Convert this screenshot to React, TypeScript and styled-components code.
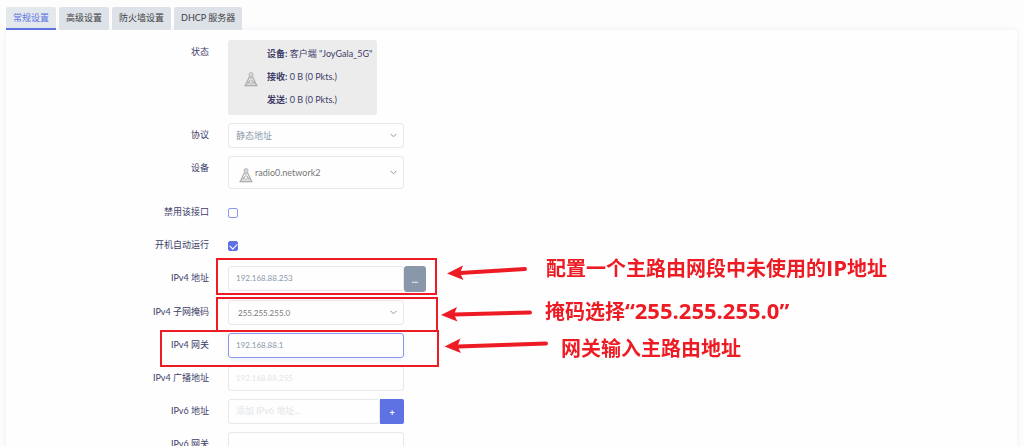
import React from "react";
import styled, { createGlobalStyle, css } from "styled-components";

const GlobalStyle = createGlobalStyle`
  * { box-sizing: border-box; }
  html, body { margin: 0; height: 100%; overflow: hidden; }
  body {
    background: #fdfdfe;
    color: #3d3d69;
    font-family: Lato, "Noto Sans CJK SC", sans-serif;
    font-size: 9px;
    line-height: 12px;
  }
  button, input, select { font: inherit; }
`;

const Page = styled.main`
  position: relative;
  padding: 7px 7px 0 6px;
`;

const TabBar = styled.nav`
  display: flex;
  gap: 3px;
`;

const Tab = styled.button<{ $active?: boolean }>`
  height: 23px;
  padding: 0 7px;
  border: 0;
  border-bottom: 2px solid ${(p) => (p.$active ? "#5e72e4" : "#dce2e7")};
  border-radius: 2px 2px 0 0;
  background: ${(p) => (p.$active ? "#e3e8ec" : "#dce2e7")};
  color: ${(p) => (p.$active ? "#5e72e4" : "#404045")};
  white-space: nowrap;
`;

const Panel = styled.section`
  display: flex;
  flex-direction: column;
  gap: 8px;
  padding-top: 10px;
  border-radius: 0 4px 0 0;
  background: #fefefe;
  box-shadow: 0 0 5px rgba(136, 152, 170, 0.15);
`;

const Row = styled.div<{ $tall?: boolean }>`
  display: grid;
  grid-template-columns: 203px minmax(0, 1fr);
  column-gap: 19px;
  align-items: start;
  min-height: ${(p) => (p.$tall ? 36 : 25)}px;
`;

const Label = styled.label`
  padding-top: 6px;
  text-align: right;
`;

const StatusCard = styled.div`
  display: flex;
  align-items: center;
  gap: 9px;
  width: 149px;
  height: 75px;
  padding: 0 0 2px 16px;
  border-radius: 3px;
  background: #ececec;
`;

const StatusLines = styled.div`
  display: flex;
  flex-direction: column;
  gap: 11px;
  white-space: nowrap;
`;

const frame = css`
  border: 1px solid #e6e8ec;
  border-radius: 3px;
  background: #fefefe;
`;

const Field = styled.input<{ $joined?: boolean; $numeric?: boolean }>`
  ${frame}
  width: ${(p) => (p.$joined ? 152 : 176)}px;
  height: 25px;
  padding: 0 7px 2px;
  color: #8898aa;
  font-size: ${(p) => (p.$numeric ? 8 : 9)}px;
  outline: 0;
  &::placeholder { color: #e3e5e9; opacity: 1; }
  &:focus {
    border-color: #8a98ee;
    box-shadow: 0 2px 5px rgba(94, 114, 228, 0.1);
  }
`;

const Group = styled.div`
  display: flex;
`;

const AddonButton = styled.button<{ $primary?: boolean }>`
  width: ${(p) => (p.$primary ? 24 : 22)}px;
  height: ${(p) => (p.$primary ? 25 : 26)}px;
  padding: 2px 0 0;
  border: 0;
  border-radius: ${(p) => (p.$primary ? "0 2px 2px 0" : "3px")};
  background: ${(p) => (p.$primary ? "#5e72e4" : "#8898aa")};
  color: #fff;
  font-weight: 700;
`;

const SelectFrame = styled.div<{ $tall?: boolean; $dark?: boolean }>`
  ${frame}
  display: flex;
  align-items: center;
  gap: 2px;
  width: 176px;
  height: ${(p) => (p.$tall ? 33 : 25)}px;
  padding: 0 6px 0 ${(p) => (p.$tall ? 10 : p.$dark ? 9 : 7)}px;
`;

const Select = styled.select<{ $dark?: boolean; $numeric?: boolean }>`
  flex: 1;
  min-width: 0;
  padding: 0;
  border: 0;
  outline: 0;
  appearance: none;
  background: transparent;
  color: ${(p) => (p.$dark ? "#777" : "#8898aa")};
  font-size: ${(p) => (p.$numeric ? 8 : 9)}px;
`;

const Check = styled.input`
  appearance: none;
  display: grid;
  place-items: center;
  width: 10px;
  height: 10px;
  margin: 8px 0 0;
  border: 1px solid #8a98ee;
  border-radius: 2px;
  background: #fefefe;
  &:checked { border-color: #5e72e4; background: #5e72e4; }
  &:checked::after {
    content: "";
    width: 6px;
    height: 4px;
    margin-bottom: 2px;
    border: solid #fff;
    border-width: 0 0 1px 1px;
    transform: rotate(-45deg);
  }
`;

const Drawing = styled.svg`
  display: block;
  flex: none;
`;

const AntennaDrawing = styled(Drawing)`
  margin-top: 5px;
`;

const Marks = styled.svg`
  position: absolute;
  top: 0;
  left: 0;
  pointer-events: none;
`;

const Note = styled.p<{ $x: number; $y: number }>`
  position: absolute;
  left: ${(p) => p.$x}px;
  top: ${(p) => p.$y}px;
  margin: 0;
  color: #ed1c24;
  font: 700 20px/28px "Open Sans", "Noto Sans CJK SC", sans-serif;
  white-space: nowrap;
  pointer-events: none;
`;

const Latin = styled.span`
  font-size: 22px;
`;

const Antenna = () => (
  <AntennaDrawing width="14" height="15" viewBox="0 0 14 15" fill="none" stroke="#adadad" aria-hidden="true">
    <path d="M5.500 4.500 1.500 13M8.500 4.500l4 8.500M6 5.500 10.500 12M8 5.500 3.500 12" strokeWidth="1.2" />
    <path d="M3.300 9.800 7 11.500l3.700-1.700" strokeWidth="1" />
    <path d="M0.500 13.500h13" strokeWidth="1.600" />
    <circle cx="7" cy="2.600" r="2" fill="#dcdcdc" strokeWidth="0.9" />
    <circle cx="7" cy="7.300" r="1" fill="#dcdcdc" stroke="none" />
  </AntennaDrawing>
);

const Chevron = () => (
  <Drawing width="7" height="5" viewBox="0 0 7 5" fill="none" stroke="#8898aa" aria-hidden="true">
    <path d="m0.5 0.800 3 3 3-3" />
  </Drawing>
);

type DropDownProps = { id: string; value: string; dark?: boolean; icon?: boolean; numeric?: boolean };

const DropDown = ({ id, value, dark, icon, numeric }: DropDownProps) => (
  <SelectFrame $tall={icon} $dark={dark}>
    {icon && <Antenna />}
    <Select id={id} $dark={dark} $numeric={numeric}>
      <option>{value}</option>
    </Select>
    <Chevron />
  </SelectFrame>
);

const tabs = ["常规设置", "高级设置", "防火墙设置", "DHCP 服务器"];

export default function App() {
  return (
    <>
      <GlobalStyle />
      <Page>
        <TabBar>
          {tabs.map((name, i) => (
            <Tab key={name} type="button" $active={i === 0}>{name}</Tab>
          ))}
        </TabBar>
        <Panel>
          <Row>
            <Label as="span">状态</Label>
            <StatusCard>
              <Antenna />
              <StatusLines>
                <span><b>设备:</b> 客户端 "JoyGala_5G"</span>
                <span><b>接收:</b> 0 B (0 Pkts.)</span>
                <span><b>发送:</b> 0 B (0 Pkts.)</span>
              </StatusLines>
            </StatusCard>
          </Row>
          <Row>
            <Label htmlFor="proto">协议</Label>
            <DropDown id="proto" value="静态地址" />
          </Row>
          <Row $tall>
            <Label htmlFor="device">设备</Label>
            <DropDown id="device" value="radio0.network2" dark icon />
          </Row>
          <Row>
            <Label htmlFor="disabled">禁用该接口</Label>
            <Check id="disabled" type="checkbox" />
          </Row>
          <Row>
            <Label htmlFor="auto">开机自动运行</Label>
            <Check id="auto" type="checkbox" defaultChecked />
          </Row>
          <Row>
            <Label htmlFor="ipaddr">IPv4 地址</Label>
            <Group>
              <Field id="ipaddr" defaultValue="192.168.88.253" $numeric />
              <AddonButton type="button">...</AddonButton>
            </Group>
          </Row>
          <Row>
            <Label htmlFor="netmask">IPv4 子网掩码</Label>
            <DropDown id="netmask" value="255.255.255.0" dark numeric />
          </Row>
          <Row>
            <Label htmlFor="gateway">IPv4 网关</Label>
            <Field id="gateway" defaultValue="192.168.88.1" $numeric autoFocus />
          </Row>
          <Row>
            <Label htmlFor="broadcast">IPv4 广播地址</Label>
            <Field id="broadcast" placeholder="192.168.88.255" $numeric />
          </Row>
          <Row>
            <Label htmlFor="ip6addr">IPv6 地址</Label>
            <Group>
              <Field id="ip6addr" placeholder="添加 IPv6 地址..." $joined />
              <AddonButton type="button" $primary>+</AddonButton>
            </Group>
          </Row>
          <Row>
            <Label htmlFor="ip6gw">IPv6 网关</Label>
            <Field id="ip6gw" />
          </Row>
        </Panel>
        <Marks width="600" height="446" viewBox="0 0 600 446" fill="none" stroke="#ed1c24" aria-hidden="true">
          <g strokeWidth="2">
            <path d="M217 259h219v35H217z" />
            <path d="M217 298h220v33H217z" />
            <path d="M161 331h277v35H161z" />
          </g>
          <g strokeWidth="4" strokeLinecap="round">
            <path d="M460 273 525 269" />
            <path d="M454 314.5 530 312.5" />
            <path d="M458 346.500 546 343.500" />
          </g>
          <g fill="#ed1c24" stroke="none">
            <path d="m447 273.500 16-8-3 7.500 3.500 7z" />
            <path d="m441 315 16-8-3 7.500 3.500 7z" />
            <path d="m444.500 346.500 16-8-3 7.500 3.500 7z" />
          </g>
        </Marks>
        <Note $x={546} $y={253}>配置一个主路由网段中未使用的<Latin>IP</Latin>地址</Note>
        <Note $x={545} $y={296}>掩码选择<Latin>“255.255.255.0”</Latin></Note>
        <Note $x={561} $y={335}>网关输入主路由地址</Note>
      </Page>
    </>
  );
}
